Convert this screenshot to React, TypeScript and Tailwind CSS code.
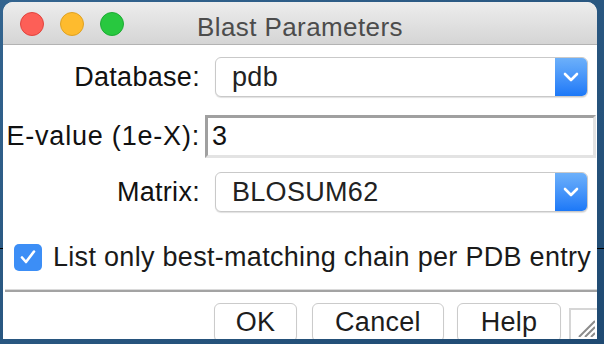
import React from 'react';

const font = { fontFamily: '"Liberation Sans", Arial, sans-serif' };

const Chevron = () => (
  <svg width="16" height="10" viewBox="0 0 16 10" fill="none">
    <path d="M2 2 L8 8 L14 2" stroke="white" strokeWidth="2.6" strokeLinecap="round" strokeLinejoin="round" />
  </svg>
);

const Select = ({ value }: { value: string }) => (
  <div className="flex h-[40px] w-[373px] overflow-hidden rounded-[6px] border border-[#c9c9c9] bg-white shadow-[0_1px_1px_rgba(0,0,0,0.12)]">
    <div className="flex flex-1 items-center pl-[16px] text-[27px] tracking-[0.3px] text-[#222]">{value}</div>
    <div className="flex w-[32px] items-center justify-center bg-gradient-to-b from-[#6cb0fa] to-[#1b78f7]">
      <Chevron />
    </div>
  </div>
);

const Button = ({ label, width }: { label: string; width: string }) => (
  <div
    className={`flex h-[39px] ${width} items-center justify-center rounded-[6px] border border-[#cbcbcb] bg-white text-[27px] tracking-[0.3px] text-[#1d1d1d] shadow-[0_1px_1px_rgba(0,0,0,0.08)]`}
  >
    {label}
  </div>
);

export default function App() {
  return (
    <div className="relative h-[344px] w-[604px] overflow-hidden bg-gradient-to-br from-[#33648f] to-[#1f4a72] pl-[3px] pt-[2px]" style={font}>
      <div className="absolute left-0 top-[248px] h-[1px] w-full bg-black" />

      <div className="relative h-[337px] w-[594px] overflow-hidden rounded-t-[10px] bg-white">
        {/* title bar */}
        <div className="relative flex h-[43px] items-start gap-[16px] border-b border-[#b3b3b3] bg-gradient-to-b from-[#ededed] to-[#d5d5d5] pl-[17px] pt-[10px]">
          <span className="h-[24px] w-[24px] rounded-full border border-[#e0443e] bg-[#fd5f57]" />
          <span className="h-[24px] w-[24px] rounded-full border border-[#dea123] bg-[#febb2e]" />
          <span className="h-[24px] w-[24px] rounded-full border border-[#1eab34] bg-[#28c83f]" />
          <div className="absolute inset-x-0 top-[6px] text-center text-[26px] tracking-[0.4px] text-[#4c4c4c]">
            Blast Parameters
          </div>
        </div>

        {/* Database */}
        <div className="mt-[12px] flex items-center">
          <div className="ml-[2px] w-[195px] text-right text-[27px] tracking-[0.3px] text-[#111]">Database:</div>
          <div className="ml-[15px]">
            <Select value="pdb" />
          </div>
        </div>

        {/* E-value */}
        <div className="mt-[17px] flex items-center">
          <div className="ml-[2px] w-[195px] whitespace-nowrap text-right text-[27px] tracking-[0.8px] text-[#111]">E-value (1e-X):</div>
          <div className="ml-[5px] flex h-[43px] w-[391px] items-center border-b-[3px] border-l-[3px] border-r-[3px] border-t-[3px] border-b-[#e3e3e3] border-l-[#a0a0a0] border-r-[#e3e3e3] border-t-[#a0a0a0] bg-white pl-[4px] text-[27px] text-[#111]">
            3
          </div>
        </div>

        {/* Matrix */}
        <div className="mt-[14px] flex items-center">
          <div className="ml-[2px] w-[195px] text-right text-[27px] tracking-[0.3px] text-[#111]">Matrix:</div>
          <div className="ml-[15px]">
            <Select value="BLOSUM62" />
          </div>
        </div>

        {/* checkbox */}
        <div className="mt-[25px] flex items-center pl-[11px]">
          <div className="flex h-[27px] w-[28px] items-center justify-center rounded-[5px] bg-[#3c8ef6]">
            <svg width="18" height="16" viewBox="0 0 18 16" fill="none">
              <path d="M3 8.5 L7 13 L15 2.5" stroke="white" strokeWidth="2.6" strokeLinecap="round" strokeLinejoin="round" />
            </svg>
          </div>
          <span className="ml-[11px] whitespace-nowrap text-[27px] tracking-[0.3px] text-[#1a1a1a]">
            List only best-matching chain per PDB entry
          </span>
        </div>

        {/* separator */}
        <div className="ml-[2px] mt-[11px] h-[3px] border-b-[2px] border-t border-b-[#a3a3a3] border-t-[#dadada]" />

        {/* buttons */}
        <div className="mt-[11px] flex pl-[211px]">
          <Button label="OK" width="w-[83px]" />
          <div className="ml-[15px]">
            <Button label="Cancel" width="w-[132px]" />
          </div>
          <div className="ml-[13px]">
            <Button label="Help" width="w-[104px]" />
          </div>
        </div>

        {/* resize grip */}
        <div className="absolute bottom-0 right-0 h-[31px] w-[28px] border-l-[2px] border-t-[2px] border-[#d6d6d6] bg-white">
          <svg className="absolute bottom-[2px] right-[2px]" width="20" height="20" viewBox="0 0 20 20">
            <path d="M4 20 L20 4 M10 20 L20 10 M16 20 L20 16" stroke="#8c8c8c" strokeWidth="2" />
          </svg>
        </div>
      </div>
    </div>
  );
}
